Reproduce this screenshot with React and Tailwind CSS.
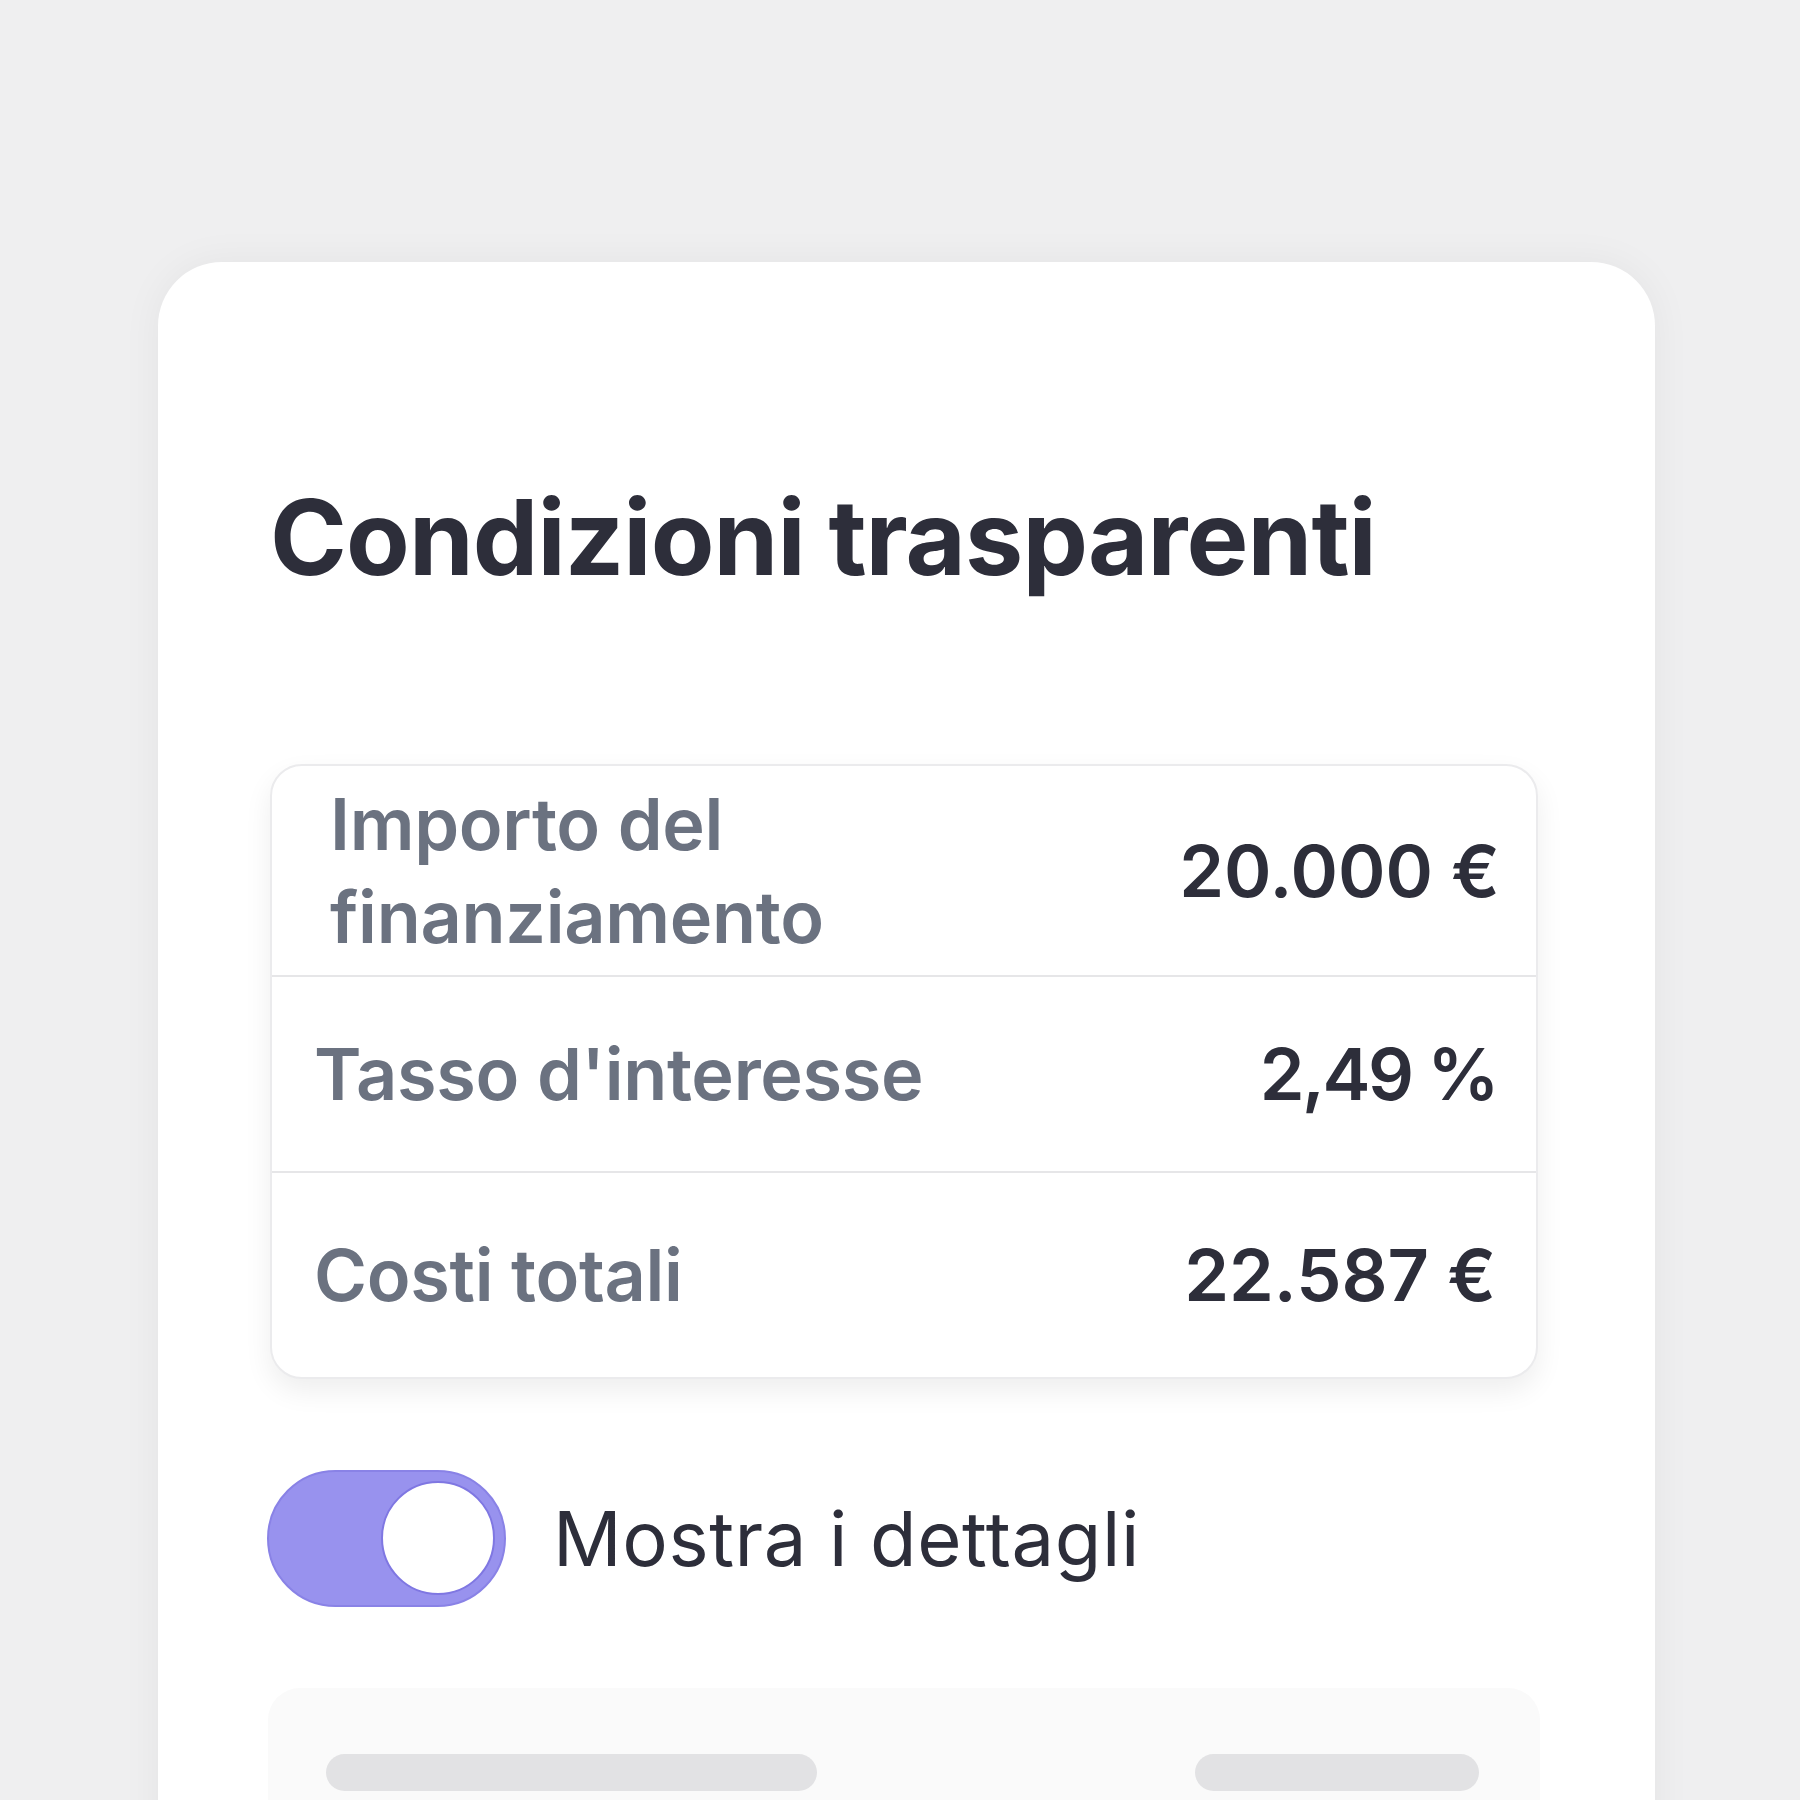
export default function App() {
  const font = { fontFamily: "Inter, 'Noto Sans', sans-serif" };
  return (
    <div className="w-[1800px] h-[1800px] bg-[#efeff0] overflow-hidden pt-[262px] pl-[158px]" style={font}>
      <div className="w-[1497px] h-[1700px] bg-white rounded-t-[64px] shadow-[0_0_40px_rgba(0,0,0,0.05)] pl-[112px] pt-[213px]">
        <h1 className="text-[104px] leading-[1.2] font-bold text-[#2d2e3a] tracking-[-0.9px]">Condizioni trasparenti</h1>
        <div className="mt-[164px] w-[1268px] rounded-[32px] border-2 border-[#ebebed] bg-white shadow-[0_12px_28px_rgba(0,0,0,0.07)]">
          <div className="h-[211px] flex items-center justify-between pl-[58px] pr-[36px] border-b-2 border-[#e6e6e8]">
            <div className="text-[72px] leading-[93px] font-semibold tracking-[-0.3px] text-[#6b7280]">Importo del<br />finanziamento</div>
            <div className="text-[72px] leading-[93px] font-semibold text-[#2d2e3a]">20.000 €</div>
          </div>
          <div className="h-[196px] flex items-center justify-between pl-[42px] pr-[39px] border-b-2 border-[#e6e6e8]">
            <div className="text-[72px] leading-[93px] font-semibold tracking-[-0.3px] text-[#6b7280]">Tasso d'interesse</div>
            <div className="text-[72px] leading-[93px] font-semibold tracking-[-2.5px] text-[#2d2e3a]">2,49 %</div>
          </div>
          <div className="h-[204px] flex items-center justify-between pl-[42px] pr-[40px]">
            <div className="text-[72px] leading-[93px] font-semibold tracking-[-0.3px] text-[#6b7280]">Costi totali</div>
            <div className="text-[72px] leading-[93px] font-semibold text-[#2d2e3a]">22.587 €</div>
          </div>
        </div>
        <div className="mt-[91px] flex items-center gap-[47px] -ml-[3px]">
          <div className="w-[239px] h-[137px] rounded-full bg-[#9892ee] border-2 border-[#8982e6] flex items-center justify-end pr-[9px]">
            <div className="w-[114px] h-[114px] rounded-full bg-white border-2 border-[#7f77e2]"></div>
          </div>
          <div className="text-[76px] leading-none font-normal tracking-[0.6px] text-[#2d2e3a]">Mostra i dettagli</div>
        </div>
        <div className="mt-[81px] -ml-[2px] w-[1272px] h-[300px] rounded-[32px] bg-[#fafafa] flex justify-between pt-[66px] pl-[58px] pr-[61px]">
          <div className="w-[491px] h-[37px] rounded-full bg-[#e2e2e4]"></div>
          <div className="w-[284px] h-[37px] rounded-full bg-[#e2e2e4]"></div>
        </div>
      </div>
    </div>
  );
}
